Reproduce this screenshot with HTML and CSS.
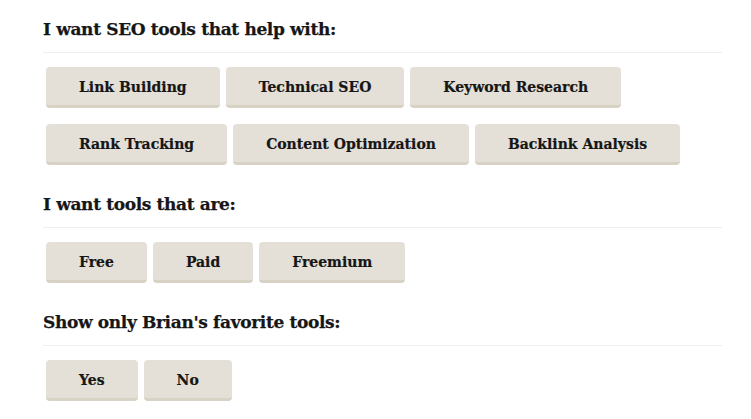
FILE: index.html
```html
<!DOCTYPE html>
<html>
<head>
<meta charset="utf-8">
<link rel="stylesheet" href="styles.css">
</head>
<body>
<div class="filters">
  <section class="group">
    <h3 class="group-title">I want SEO tools that help with:</h3>
    <div class="row">
      <button class="chip">Link Building</button>
      <button class="chip">Technical SEO</button>
      <button class="chip">Keyword Research</button>
    </div>
    <div class="row">
      <button class="chip">Rank Tracking</button>
      <button class="chip">Content Optimization</button>
      <button class="chip">Backlink Analysis</button>
    </div>
  </section>
  <section class="group">
    <h3 class="group-title">I want tools that are:</h3>
    <div class="row">
      <button class="chip">Free</button>
      <button class="chip">Paid</button>
      <button class="chip">Freemium</button>
    </div>
  </section>
  <section class="group">
    <h3 class="group-title">Show only Brian's favorite tools:</h3>
    <div class="row">
      <button class="chip">Yes</button>
      <button class="chip">No</button>
    </div>
  </section>
</div>
</body>
</html>
```
FILE: styles.css
```css
html, body {
  margin: 0;
  padding: 0;
  background: #ffffff;
}
body {
  font-family: "DejaVu Serif", Georgia, serif;
  color: #161616;
}
.filters {
  width: 679px;
  padding: 17px 0 0 43px;
}
.group + .group {
  margin-top: 27px;
}
.group-title {
  margin: 0 0 14px 0;
  padding-bottom: 11px;
  border-bottom: 1px solid #eeeeee;
  font-size: 17px;
  font-weight: bold;
  line-height: 24px;
  letter-spacing: -0.35px;
  color: #161616;
  -webkit-text-stroke: 0.25px #161616;
}
.row {
  display: flex;
  gap: 6px;
  padding-left: 3px;
}
.row + .row {
  margin-top: 16px;
}
.chip {
  font-family: "DejaVu Serif", Georgia, serif;
  font-size: 14px;
  font-weight: bold;
  color: #161616;
  background: #e4e0d7;
  border: none;
  border-bottom: 3px solid #d8d2c5;
  border-radius: 4px;
  height: 41px;
  padding: 2px 33px 0;
  line-height: 20px;
  cursor: pointer;
  -webkit-text-stroke: 0.2px #161616;
}
```
